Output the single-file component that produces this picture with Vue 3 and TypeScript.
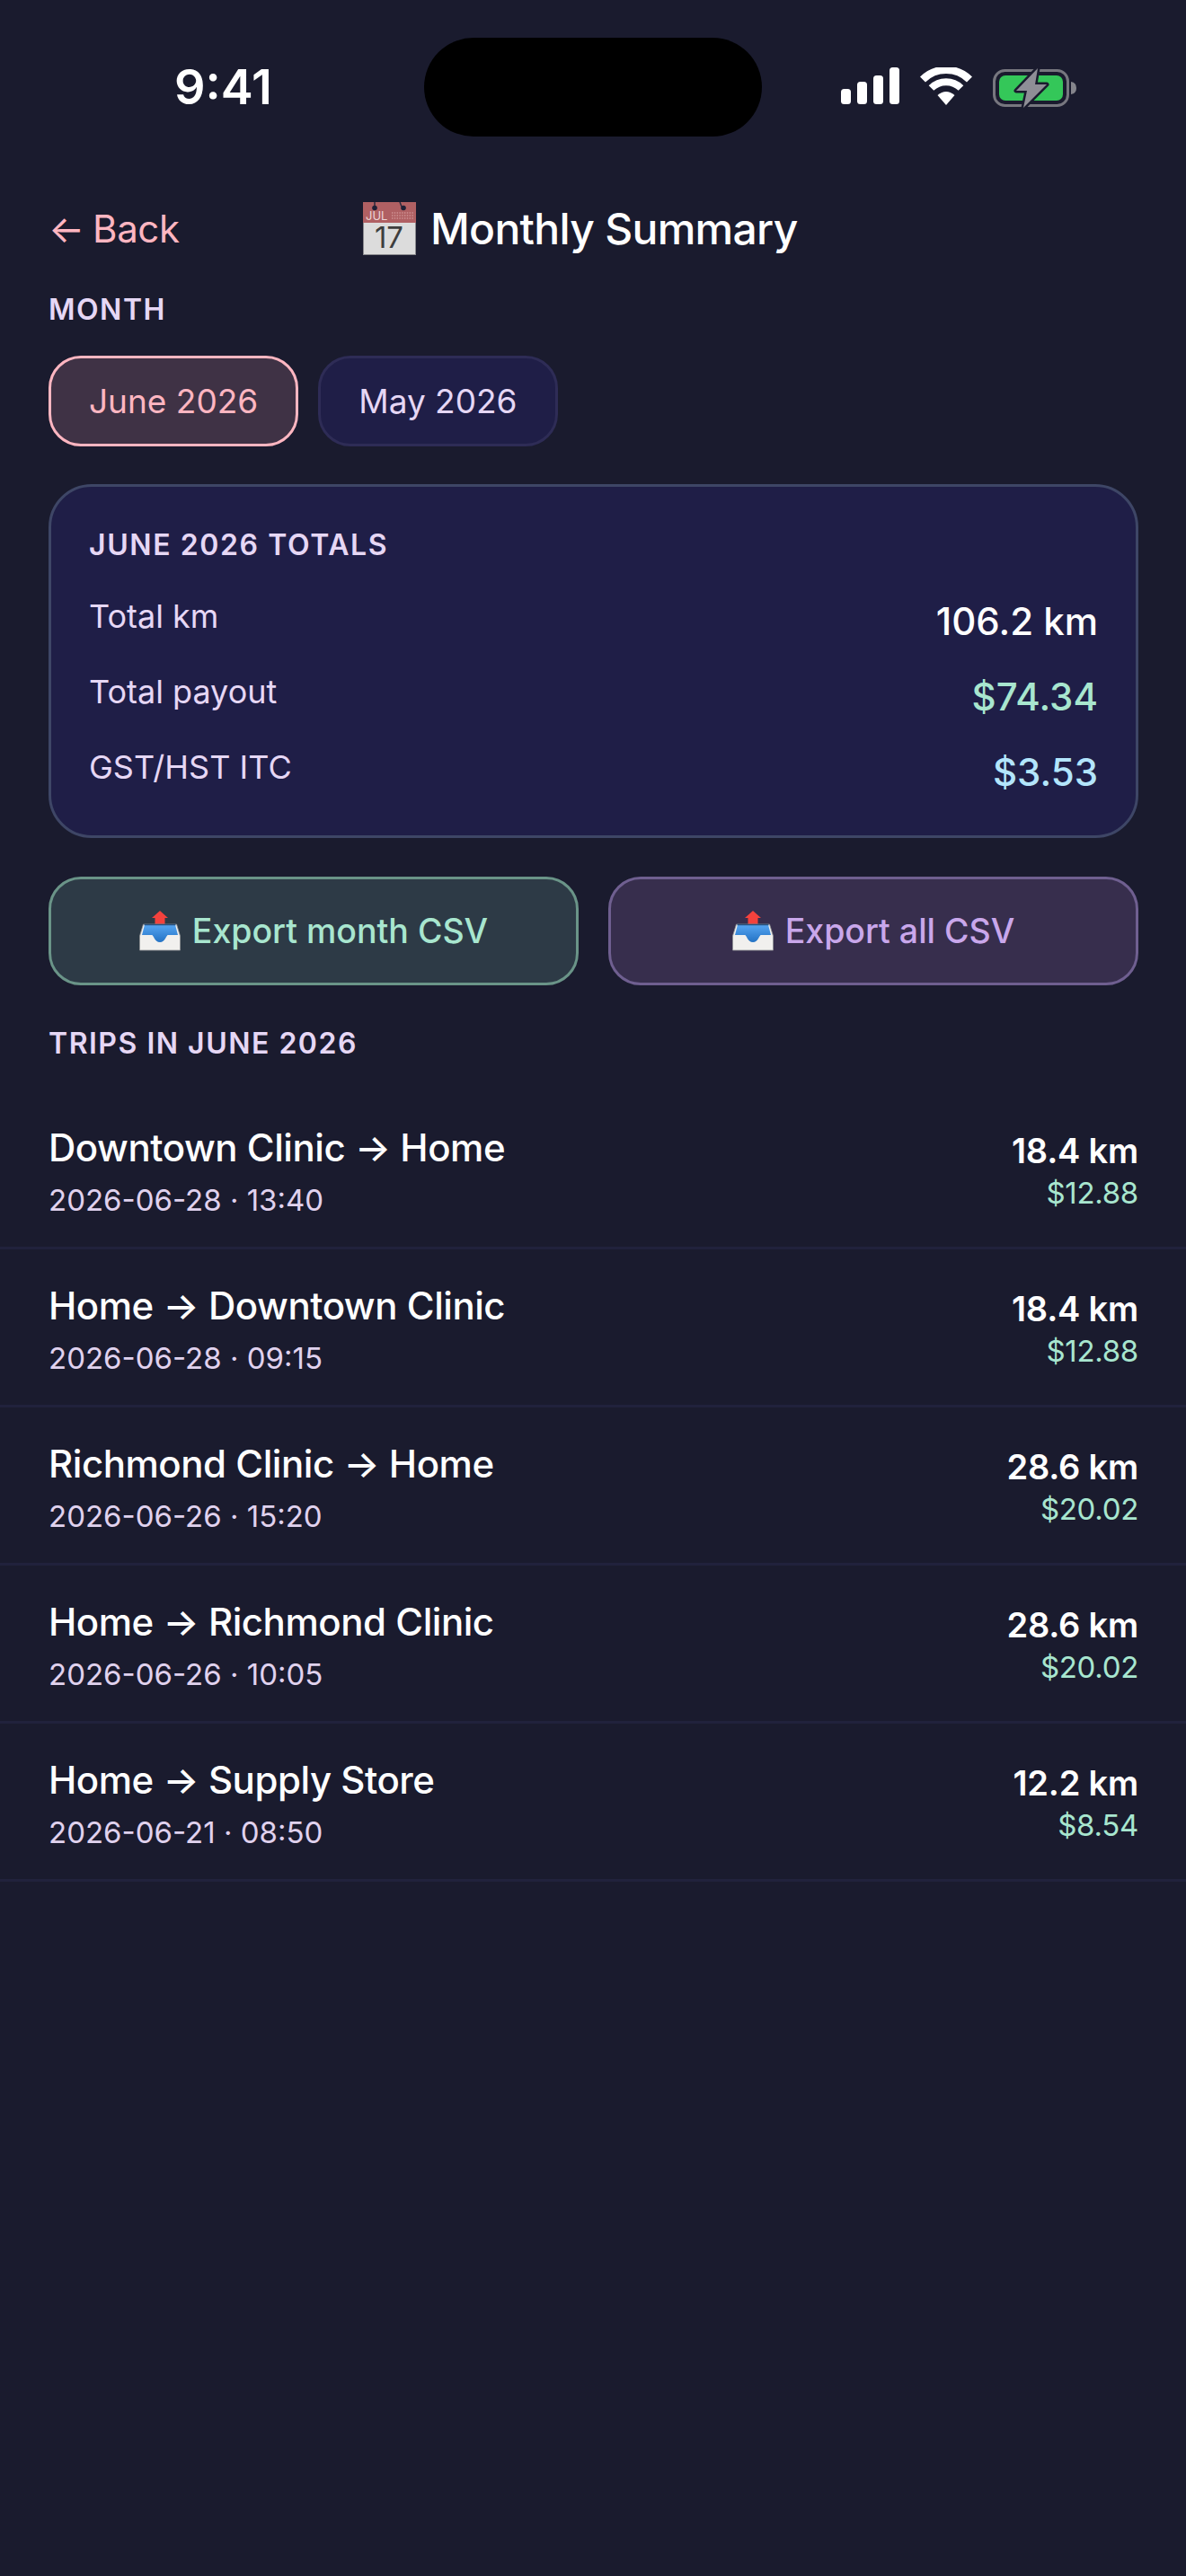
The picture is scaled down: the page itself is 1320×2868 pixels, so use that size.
<script setup lang="ts">
interface Trip {
  route: string
  when: string
  km: string
  pay: string
}

const months = [
  { label: 'June 2026', active: true },
  { label: 'May 2026', active: false },
]

const totals = [
  { label: 'Total km', value: '106.2 km', tone: 'plain' },
  { label: 'Total payout', value: '$74.34', tone: 'green' },
  { label: 'GST/HST ITC', value: '$3.53', tone: 'blue' },
]

const exports_ = [
  { label: 'Export month CSV', tone: 'green' },
  { label: 'Export all CSV', tone: 'purple' },
]

const trips: Trip[] = [
  { route: 'Downtown Clinic → Home', when: '2026-06-28 · 13:40', km: '18.4 km', pay: '$12.88' },
  { route: 'Home → Downtown Clinic', when: '2026-06-28 · 09:15', km: '18.4 km', pay: '$12.88' },
  { route: 'Richmond Clinic → Home', when: '2026-06-26 · 15:20', km: '28.6 km', pay: '$20.02' },
  { route: 'Home → Richmond Clinic', when: '2026-06-26 · 10:05', km: '28.6 km', pay: '$20.02' },
  { route: 'Home → Supply Store', when: '2026-06-21 · 08:50', km: '12.2 km', pay: '$8.54' },
]
</script>

<template>
  <div class="screen">
    <div class="status">
      <div class="island"></div>
      <span class="time">9:41</span>
      <div class="status-icons">
        <svg class="signal" width="65" height="41" viewBox="0 0 65 41">
          <rect x="0" y="24" width="11" height="17" rx="3.5" />
          <rect x="18" y="16" width="11" height="25" rx="3.5" />
          <rect x="36" y="9" width="11" height="32" rx="3.5" />
          <rect x="54" y="0" width="11" height="41" rx="3.5" />
        </svg>
        <svg class="wifi" width="58" height="42" viewBox="0 0 58 42">
          <path d="M3 13.5 A37 37 0 0 1 55 13.5" fill="none" stroke="#fff" stroke-width="8.5" />
          <path d="M12.5 23 A23.5 23.5 0 0 1 45.5 23" fill="none" stroke="#fff" stroke-width="8" />
          <path d="M19.5 31 Q29 23 38.5 31 L29 42 Z" fill="#fff" />
        </svg>
        <svg class="battery" width="93" height="46" viewBox="0 0 93 46">
          <rect x="1.5" y="3.5" width="82" height="39" rx="12" fill="none" stroke="#77777f" stroke-width="3" />
          <rect x="7" y="9" width="71" height="28" rx="7" fill="#34c759" />
          <path d="M87 16 Q93 17 93 23 Q93 29 87 30 Z" fill="#85858c" />
          <path
            d="M50 1 L26 26 H38 L34 45 L60 19 H47 Z"
            fill="#8e8e96"
            stroke="#1a1b2e"
            stroke-width="5"
            stroke-linejoin="round"
            paint-order="stroke"
          />
        </svg>
      </div>
    </div>

    <header class="topbar">
      <span class="back">← Back</span>
      <h1 class="title">
        <!-- tear-off calendar -->
        <svg width="59" height="59" viewBox="0 0 59 59">
          <rect x="0.5" y="0.5" width="58" height="58" fill="#dcdcdc" stroke="#8c8c90" />
          <rect x="0" y="0" width="59" height="23" fill="#b06063" />
          <path d="M13 0 v6 M41 0 l2 5" stroke="#2a2a3e" stroke-width="1.5" />
          <circle cx="13" cy="6.5" r="2.8" fill="#1e2036" />
          <circle cx="45" cy="6.5" r="2.8" fill="#1e2036" />
          <text x="3" y="19.5" class="cal-month">JUL</text>
          <path d="M32 12 h24 M32 15 h24 M32 18 h24" stroke="#cf9395" stroke-width="1.6" stroke-dasharray="1.4 1.4" />
          <text x="29" y="50.5" class="cal-day" text-anchor="middle">17</text>
        </svg>
        <span>Monthly Summary</span>
      </h1>
      <span class="topbar-spacer"></span>
    </header>

    <main class="content">
      <div class="section-label">MONTH</div>
      <div class="months">
        <button v-for="m in months" :key="m.label" class="month" :class="{ active: m.active }">
          {{ m.label }}
        </button>
      </div>

      <section class="card">
        <div class="card-title">JUNE 2026 TOTALS</div>
        <div v-for="t in totals" :key="t.label" class="total-row">
          <span class="total-label">{{ t.label }}</span>
          <span class="total-value" :class="t.tone">{{ t.value }}</span>
        </div>
      </section>

      <div class="exports">
        <button v-for="e in exports_" :key="e.label" class="export" :class="e.tone">
          <!-- outbox tray with red arrow -->
          <svg width="46" height="45" viewBox="0 0 46 45">
            <defs>
              <linearGradient id="tray-blue" x1="0" y1="0" x2="0" y2="1">
                <stop offset="0" stop-color="#56a5f2" />
                <stop offset="1" stop-color="#2473c4" />
              </linearGradient>
            </defs>
            <path d="M17.5 15 V8 H14 L23 0 L32 8 H28.5 V15 Z" fill="#f4423d" />
            <path d="M4.5 15 H41.5 L45.5 28 V44 H0.5 V28 Z" fill="#f1f0ee" stroke="#8d8f92" stroke-width="0.8" />
            <path
              d="M6 15.5 H40 L43 27 H32 C30 27 29 35 23 35 C17 35 16 27 14 27 H3 Z"
              fill="url(#tray-blue)"
            />
            <path d="M5.5 15.5 H40.5" stroke="#28517d" stroke-width="1.4" />
          </svg>
          <span>{{ e.label }}</span>
        </button>
      </div>

      <div class="section-label trips-label">TRIPS IN JUNE 2026</div>
    </main>

    <ul class="trips">
      <li v-for="(trip, i) in trips" :key="i" class="trip">
        <div class="trip-main">
          <div class="route">{{ trip.route }}</div>
          <div class="when">{{ trip.when }}</div>
        </div>
        <div class="amounts">
          <div class="km">{{ trip.km }}</div>
          <div class="pay">{{ trip.pay }}</div>
        </div>
      </li>
    </ul>
  </div>
</template>

<style>
body {
  background: #1a1b2e;
}
</style>

<style scoped>
.screen {
  width: 1320px;
  min-height: 2868px;
  background: #1a1b2e;
  color: #fff;
  font-family: Inter, "Noto Sans", sans-serif;
}

.status {
  position: relative;
  height: 190px;
  display: flex;
  align-items: flex-start;
  padding: 71px 122px 0 194px;
  box-sizing: border-box;
  justify-content: space-between;
}

.island {
  position: absolute;
  left: 472px;
  top: 42px;
  width: 376px;
  height: 110px;
  border-radius: 55px;
  background: #000;
}

.time {
  font-size: 54px;
  font-weight: 600;
  line-height: 52px;
}

.status-icons {
  display: flex;
  align-items: flex-start;
  gap: 23px;
  margin-top: 4px;
}

.signal {
  fill: #fff;
}

.topbar {
  display: flex;
  align-items: center;
  justify-content: space-between;
  padding: 34px 54px 0;
  height: 94px;
  box-sizing: border-box;
}

.back {
  font-size: 42px;
  color: #ffb6c1;
  letter-spacing: -0.4px;
  word-spacing: -2px;
  white-space: nowrap;
}

.title {
  display: flex;
  align-items: center;
  gap: 16px;
  margin: 0;
  font-size: 48px;
  font-weight: 500;
  letter-spacing: -0.7px;
}

.cal-month {
  font: 400 13px Inter, sans-serif;
  letter-spacing: 0;
  fill: #ecd6d6;
}

.cal-day {
  font: 400 33px Inter, sans-serif;
  letter-spacing: 0;
  fill: #3e3e3e;
}

.topbar-spacer {
  width: 174px;
}

.content {
  padding: 0 53px 0 54px;
}

.section-label {
  font-size: 32px;
  font-weight: 600;
  letter-spacing: 1.5px;
  color: #e6d7f5;
  line-height: 40px;
  margin-top: 41px;
}

.months {
  display: flex;
  gap: 22px;
  margin-top: 31px;
}

.month {
  height: 101px;
  padding: 0 42px;
  border-radius: 36px;
  border: 3px solid #2e2c56;
  background: #1f1e47;
  color: #e6d7f5;
  font: 400 37px Inter, sans-serif;
}

.month.active {
  border-color: #ffb6c1;
  background: #3f3245;
  color: #ffb6c1;
}

.card {
  margin-top: 42px;
  height: 394px;
  box-sizing: border-box;
  padding: 45px 42px 0;
  border: 3px solid #3e4666;
  border-radius: 48px;
  background: #1f1e47;
}

.card-title {
  font-size: 32px;
  font-weight: 600;
  letter-spacing: 1.6px;
  color: #e6d7f5;
  line-height: 40px;
  margin-bottom: 37px;
}

.total-row {
  display: flex;
  justify-content: space-between;
  height: 84px;
}

.total-label {
  font-size: 36px;
  color: #e6d7f5;
}

.total-value {
  font-size: 42px;
  font-weight: 500;
  margin-top: 2px;
}

.total-value.green {
  color: #a8e6cf;
}

.total-value.blue {
  color: #b3e5fc;
}

.exports {
  display: grid;
  grid-template-columns: 1fr 1fr;
  gap: 33px;
  margin-top: 43px;
}

.export {
  height: 121px;
  display: flex;
  align-items: center;
  justify-content: center;
  gap: 13px;
  border-radius: 36px;
  font: 500 37.5px Inter, sans-serif;
}

.export.green {
  background: #2d3a46;
  border: 3px solid #6a9488;
  color: #a8e6cf;
}

.export.purple {
  background: #372e4d;
  border: 3px solid #6f5f90;
  color: #c9a7eb;
}

.trips-label {
  margin-top: 45px;
}

.trips {
  list-style: none;
  margin: 33px 0 0;
  padding: 0;
}

.trip {
  display: flex;
  justify-content: space-between;
  align-items: center;
  height: 176px;
  box-sizing: border-box;
  padding: 2px 53px 0 54px;
  border-bottom: 3px solid #21223c;
}

.trip-main {
  margin-top: 2px;
}

.route {
  font-size: 42px;
  font-weight: 500;
  letter-spacing: -0.45px;
  line-height: 52px;
}

.when {
  font-size: 33px;
  color: #e0d2ee;
  margin-top: 12px;
}

.amounts {
  text-align: right;
}

.km {
  font-size: 38px;
  font-weight: 600;
  letter-spacing: -0.2px;
}

.pay {
  font-size: 33px;
  letter-spacing: -0.3px;
  color: #a8e6cf;
  margin-top: 4px;
}
</style>
